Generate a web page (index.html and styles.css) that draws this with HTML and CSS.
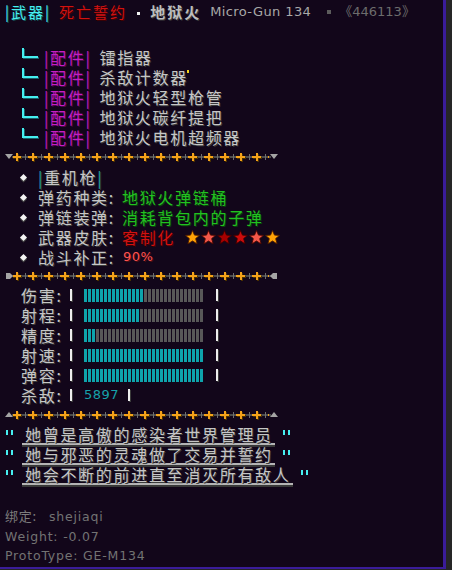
FILE: index.html
```html
<!DOCTYPE html>
<html lang="zh-CN">
<head>
  <meta charset="UTF-8" />
  <meta name="viewport" content="width=device-width, initial-scale=1.0" />
  <title>死亡誓约 · 地狱火</title>
  <link rel="stylesheet" href="styles.css">
</head>
<body>
  <!-- shared rail pattern for the section dividers -->
  <svg class="defs" width="0" height="0" aria-hidden="true">
    <defs>
      <pattern id="rail" x="9" y="0" width="16" height="10" patternUnits="userSpaceOnUse">
        <rect x="0" y="2" width="1" height="6" fill="#6e6e6e"/>
        <rect x="4" y="5" width="9" height="2" fill="#4a3000"/>
        <rect x="8" y="2" width="2" height="8" fill="#4a3000"/>
        <rect x="3" y="4" width="9" height="2" fill="#f4a21a"/>
        <rect x="7" y="1" width="2" height="8" fill="#f4a21a"/>
      </pattern>
      <polygon id="star" points="7,0 9,4.6 14,4.9 10.2,8.1 11.6,13.4 7,10.5 2.4,13.4 3.8,8.1 0,4.9 5,4.6"/>
    </defs>
  </svg>

  <div class="tooltip">
    <div class="title">
      <span class="tag">|武器|</span>
      <span class="name">死亡誓约</span>
      <span class="dot"></span>
      <span class="series">地狱火</span>
      <span class="model">Micro-Gun 134</span>
      <span class="sq"></span>
      <span class="serial">《446113》</span>
    </div>

    <ul class="parts">
      <li><i class="branch"></i><span class="part-tag">|配件|</span>镭指器</li>
      <li><i class="branch"></i><span class="part-tag">|配件|</span>杀敌计数器<i class="spark"></i></li>
      <li><i class="branch"></i><span class="part-tag">|配件|</span>地狱火轻型枪管</li>
      <li><i class="branch"></i><span class="part-tag">|配件|</span>地狱火碳纤提把</li>
      <li><i class="branch"></i><span class="part-tag">|配件|</span>地狱火电机超频器</li>
    </ul>

    <svg class="rail" width="282" height="10" viewBox="0 0 282 10">
      <rect x="12" y="4" width="259" height="2" fill="#4c4c4c"/>
      <rect x="13" y="0" width="256" height="10" fill="url(#rail)"/>
      <polygon points="5,2 13,2 9,7" fill="#a4a4a4"/>
      <polygon points="270,2 278,2 274,7" fill="#a4a4a4"/>
    </svg>

    <ul class="stats">
      <li><span class="class-tag">|</span>重机枪<span class="class-tag">|</span></li>
      <li>弹药种类:<span class="green">地狱火弹链桶</span></li>
      <li>弹链装弹:<span class="green">消耗背包内的子弹</span></li>
      <li>武器皮肤:<span class="red">客制化</span>
        <svg class="stars" width="96" height="15" viewBox="0 0 96 15">
          <use href="#star" x="0.5" y="0.5" fill="#ffa206" stroke="#4a1800" stroke-width="0.9"/>
          <use href="#star" x="16.5" y="0.5" fill="#f4584a" stroke="#4a0800" stroke-width="0.9"/>
          <use href="#star" x="32.5" y="0.5" fill="#a80000" stroke="#3a0000" stroke-width="0.9"/>
          <use href="#star" x="48.5" y="0.5" fill="#cc0c0c" stroke="#3a0000" stroke-width="0.9"/>
          <use href="#star" x="64.5" y="0.5" fill="#f4584a" stroke="#4a0800" stroke-width="0.9"/>
          <use href="#star" x="80.5" y="0.5" fill="#ffa206" stroke="#4a1800" stroke-width="0.9"/>
        </svg>
      </li>
      <li>战斗补正:<span class="pct">90%</span></li>
    </ul>

    <svg class="rail rail-mid" width="282" height="10" viewBox="0 0 282 10">
      <rect x="12" y="4" width="259" height="2" fill="#4c4c4c"/>
      <rect x="13" y="0" width="256" height="10" fill="url(#rail)"/>
      <polygon points="6,2 10,2 13,5 10,8 6,8" fill="#a4a4a4"/>
      <polygon points="277,2 273,2 270,5 273,8 277,8" fill="#a4a4a4"/>
    </svg>

    <div class="meters">
      <div class="meter"><span class="meter-label">伤害:</span><i class="tick"></i><span class="bar"><span class="fill" style="width:60px"></span></span><i class="tick end"></i></div>
      <div class="meter"><span class="meter-label">射程:</span><i class="tick"></i><span class="bar"><span class="fill" style="width:56px"></span></span><i class="tick end"></i></div>
      <div class="meter"><span class="meter-label">精度:</span><i class="tick"></i><span class="bar"><span class="fill" style="width:12px"></span></span><i class="tick end"></i></div>
      <div class="meter"><span class="meter-label">射速:</span><i class="tick"></i><span class="bar"><span class="fill" style="width:119px"></span></span><i class="tick end"></i></div>
      <div class="meter"><span class="meter-label">弹容:</span><i class="tick"></i><span class="bar"><span class="fill" style="width:119px"></span></span><i class="tick end"></i></div>
      <div class="meter"><span class="meter-label">杀敌:</span><i class="tick"></i><span class="kills">5897</span><i class="tick"></i></div>
    </div>

    <svg class="rail rail-low" width="282" height="10" viewBox="0 0 282 10">
      <rect x="12" y="4" width="259" height="2" fill="#4c4c4c"/>
      <rect x="13" y="0" width="256" height="10" fill="url(#rail)"/>
      <polygon points="5,7 13,7 9,2" fill="#a4a4a4"/>
      <polygon points="270,7 278,7 274,2" fill="#a4a4a4"/>
    </svg>

    <div class="lore">
      <p><i class="qm"></i><span class="line">她曾是高傲的感染者世界管理员</span><i class="qm close"></i></p>
      <p><i class="qm"></i><span class="line">她与邪恶的灵魂做了交易并誓约</span><i class="qm close"></i></p>
      <p><i class="qm"></i><span class="line">她会不断的前进直至消灭所有敌人</span><i class="qm close"></i></p>
    </div>

    <div class="meta">
      <p><span class="bind">绑定:</span>shejiaqi</p>
      <p>Weight: -0.07</p>
      <p>ProtoType: GE-M134</p>
    </div>
  </div>
</body>
</html>
```

FILE: styles.css
```css
:root {
  --panel-bg: #12061a;
  --frame: #3a1c9a;
  --text: #c6c6c6;
  --text-shadow: #3c3c3c;
  --cyan: #46eef0;
  --magenta: #c41ec4;
  --green: #22c022;
  --red: #d01212;
  --teal: #0ea4ac;
  --cjk: "Noto Sans CJK SC", "DejaVu Sans", sans-serif;
  --latin: "DejaVu Sans", "Noto Sans CJK SC", sans-serif;
}

* {
  box-sizing: border-box;
  margin: 0;
  padding: 0;
}

html, body {
  height: 100%;
}

body {
  background-color: #262626;
  font-family: var(--cjk);
  overflow: hidden;
}

.defs {
  display: block;
  width: 0;
  height: 0;
}

.tooltip {
  width: 446px;
  height: 569px;
  background-color: var(--panel-bg);
  border-right: 3px solid var(--frame);
  border-bottom: 2px solid var(--frame);
  padding: 2px 0 0 5px;
  color: var(--text);
  font-size: 16px;
  letter-spacing: 1.7px;
  line-height: 20px;
  text-shadow: 1px 1px 0 var(--text-shadow);
}

ul {
  list-style: none;
}

/* header line */
.title {
  display: flex;
  align-items: center;
  height: 20px;
  font-size: 15px;
  letter-spacing: 2px;
  white-space: nowrap;
}

.tag {
  color: var(--cyan);
  text-shadow: 1px 1px 0 #145a5e;
}

.name {
  margin-left: 8px;
  color: var(--red);
  text-shadow: 1px 1px 0 #420000;
}

.dot {
  width: 3px;
  height: 3px;
  margin: 2px 10px 0 10px;
  background-color: #f0f0f0;
}

.series {
  color: #bdbdbd;
  font-weight: 700;
}

.model {
  margin-left: 9px;
  font-family: var(--latin);
  font-size: 13px;
  letter-spacing: 0.4px;
  color: #a8a8a8;
  text-shadow: none;
}

.sq {
  width: 4px;
  height: 4px;
  margin-left: 16px;
  background-color: #5c5c5c;
}

.serial {
  margin-left: 8px;
  font-family: var(--latin);
  font-size: 13px;
  letter-spacing: 0;
  color: #6c6c6c;
  text-shadow: none;
}

/* attachments */
.parts {
  margin-top: 25px;
  padding-left: 17px;
}

.parts li {
  display: flex;
  align-items: center;
  height: 20px;
}

.branch {
  align-self: flex-start;
  width: 16px;
  height: 10px;
  margin: 1px 6px 0 0;
  border-left: 2px solid var(--cyan);
  border-bottom: 2px solid var(--cyan);
  filter: drop-shadow(1px 1px 0 #17606a);
}

.part-tag {
  margin-right: 8px;
  color: var(--magenta);
  text-shadow: 1px 1px 0 #4a0a4a;
}

.spark {
  align-self: flex-start;
  width: 2px;
  height: 3px;
  margin: 3px 0 0 -1px;
  background-color: #f2d21a;
}

/* dividers */
.rail {
  display: block;
  margin: 5px 0 0 -5px;
}

.rail-mid {
  margin-top: 4px;
}

/* properties */
.stats {
  margin-top: 5px;
  padding-left: 16px;
}

.stats li {
  display: flex;
  align-items: center;
  height: 20px;
  white-space: nowrap;
}

.stats li::before {
  content: "";
  width: 5px;
  height: 5px;
  margin-right: 12px;
  background-color: #f4f4f4;
  transform: rotate(45deg);
  box-shadow: 1px 1px 0 #444;
}

.class-tag {
  color: #22a8ac;
}

.green {
  margin-left: 7px;
  color: var(--green);
  text-shadow: 1px 1px 0 #0a420a;
}

.red {
  margin-left: 7px;
  color: var(--red);
  text-shadow: 1px 1px 0 #420000;
}

.stars {
  margin-left: 10px;
}

.pct {
  margin-left: 8px;
  font-family: var(--latin);
  font-size: 13px;
  letter-spacing: 0.5px;
  color: #ff5252;
  text-shadow: 1px 1px 0 #4a1010;
}

/* stat bars */
.meters {
  margin-top: 4px;
  padding-left: 16px;
}

.meter {
  display: flex;
  align-items: center;
  height: 20px;
}

.meter-label {
  width: 49px;
  white-space: nowrap;
}

.tick {
  width: 2px;
  height: 12px;
  margin-right: 12px;
  background-color: #eeeeee;
  box-shadow: 1px 1px 0 #3a3a3a;
}

.tick.end {
  margin: 0 0 0 13px;
}

.bar {
  display: block;
  width: 119px;
  height: 13px;
  background: repeating-linear-gradient(90deg, #585858 0 3px, transparent 3px 4px);
}

.fill {
  display: block;
  height: 100%;
  background: repeating-linear-gradient(90deg, var(--teal) 0 3px, transparent 3px 4px);
}

.kills {
  width: 44px;
  font-family: var(--latin);
  font-size: 13px;
  letter-spacing: 0.5px;
  color: #16a2aa;
  text-shadow: none;
}

/* quote lines */
.lore {
  margin-top: 5px;
}

.lore p {
  display: flex;
  align-items: center;
  height: 20px;
  white-space: nowrap;
}

.qm {
  align-self: flex-start;
  width: 7px;
  height: 5px;
  margin: 5px 0 0 1px;
  background: linear-gradient(90deg, var(--cyan) 0 2px, transparent 2px 5px, var(--cyan) 5px 7px);
}

.qm.close {
  margin-left: 8px;
}

.line {
  margin-left: 9px;
  padding: 0 2px 0 3px;
  line-height: 17px;
  border-bottom: 2px solid #b4b4b4;
  box-shadow: 0 2px 0 #383838;
}

/* footer info */
.meta {
  margin-top: 21px;
  font-family: var(--latin);
  font-size: 12.5px;
  letter-spacing: 0.8px;
  line-height: 19.5px;
  color: #737373;
  text-shadow: none;
}

.bind {
  margin-right: 12px;
  font-family: var(--cjk);
  font-size: 13px;
  color: #7c7c7c;
}
```
